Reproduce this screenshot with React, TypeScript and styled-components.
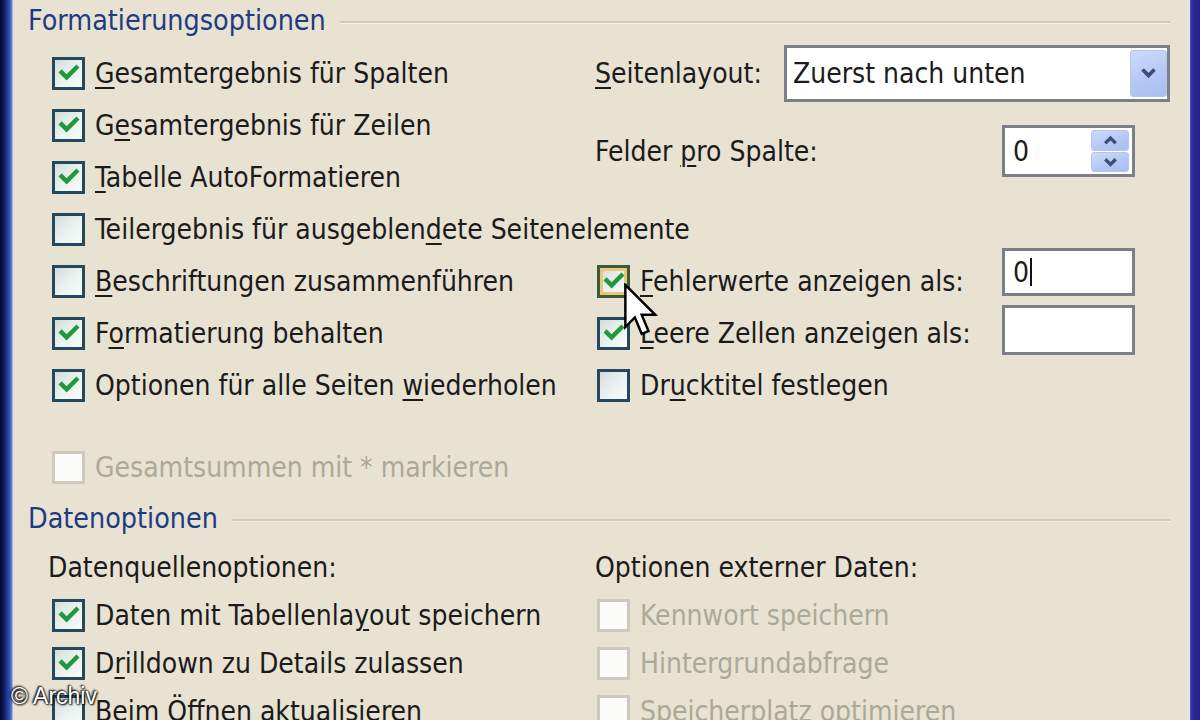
import React from "react";
import styled, { createGlobalStyle, css } from "styled-components";

const Global = createGlobalStyle`
  html, body { margin: 0; padding: 0; width: 1200px; height: 720px; overflow: hidden; background: #e7e2d2; }
  #root { width: 1200px; height: 720px; }
`;

const FONT = `"DejaVu Sans Condensed", "DejaVu Sans", sans-serif`;

const Frame = styled.div`
  position: relative;
  display: flex;
  width: 1200px;
  height: 720px;
  overflow: hidden;
  background: #e7e2d2;
  font-family: ${FONT};
  font-size: 28px;
  color: #1b1b1b;
`;

const EdgeLeft = styled.div`
  width: 13px;
  flex: none;
  background: linear-gradient(90deg, #040828 0, #0e1c60 30%, #2b4cb4 70%, #5a78d0 88%, #c9cfe0 100%);
`;

const EdgeRight = styled.div`
  width: 12px;
  flex: none;
  background: linear-gradient(90deg, #e4e6ee 0, #e4e6ee 2px, #4545b0 2px, #2a2a98 5px, #22228a 100%);
`;

const Body = styled.div`
  flex: 1;
  display: flex;
  flex-direction: column;
  padding: 0 18px 0 15px;
  min-width: 0;
`;

const SectionHeader = styled.div<{ $h: number }>`
  display: flex;
  align-items: center;
  height: ${(p) => p.$h}px;
  flex: none;
`;

const SectionTitle = styled.span`
  color: #213b82;
  font-size: 28.4px;
  white-space: nowrap;
`;

const Rule = styled.div`
  flex: 1;
  margin-left: 14px;
  margin-top: 4px;
  border-top: 2px solid #cfcbbb;
  border-bottom: 1px solid #f4f1e6;
`;

const OptionGrid = styled.div<{ $row: number; $top: number }>`
  display: grid;
  grid-template-columns: 543px 1fr;
  grid-auto-rows: ${(p) => p.$row}px;
  margin-left: 24px;
  margin-top: ${(p) => p.$top}px;
  flex: none;
`;

const Cell = styled.div<{ $col?: string; $row?: string; $shift?: number }>`
  display: flex;
  align-items: center;
  min-width: 0;
  ${(p) => p.$col && css`grid-column: ${p.$col};`}
  ${(p) => p.$row && css`grid-row: ${p.$row};`}
  margin-left: ${(p) => p.$shift ?? 0}px;
`;

const CheckRow = styled.label<{ $disabled?: boolean }>`
  display: flex;
  align-items: center;
  gap: 10px;
  white-space: nowrap;
  color: ${(p) => (p.$disabled ? "#aba999" : "#1b1b1b")};
`;

const Box = styled.span<{ $disabled?: boolean; $hot?: boolean }>`
  width: 33px;
  height: 33px;
  box-sizing: border-box;
  flex: none;
  display: flex;
  align-items: center;
  justify-content: center;
  border: 3px solid ${(p) => (p.$disabled ? "#cdcabd" : p.$hot ? "#3c5a3a" : "#24495e")};
  background: ${(p) =>
    p.$disabled ? "#fbfbf8" : "linear-gradient(135deg, #d6dcda 0%, #e9f1ef 50%, #fafcfb 100%)"};
  ${(p) => p.$hot && css`box-shadow: inset 0 0 0 3px #e9c87a;`}
`;

const Mn = styled.u`
  text-decoration-thickness: 2px;
  text-underline-offset: 4px;
`;

const Plain = styled.span``;

const Check = ({ on }: { on: boolean }) =>
  on ? (
    <svg width="22" height="22" viewBox="0 0 11 11">
      <path d="M1.8 5.2 L4.3 7.7 L9.2 2.8" fill="none" stroke="#1f9a3a" strokeWidth="2.2" strokeLinecap="square" />
    </svg>
  ) : null;

type CB = { label: string; m?: number; on?: boolean; disabled?: boolean; hot?: boolean };

const renderLabel = (label: string, m?: number) => {
  if (m === undefined) return <Plain>{label}</Plain>;
  return (
    <Plain>
      {label.slice(0, m)}
      <Mn>{label[m]}</Mn>
      {label.slice(m + 1)}
    </Plain>
  );
};

const CheckItem = ({ label, m, on = false, disabled, hot }: CB) => (
  <CheckRow $disabled={disabled}>
    <Box $disabled={disabled} $hot={hot}>
      <Check on={on} />
    </Box>
    {renderLabel(label, m)}
  </CheckRow>
);

const FieldLabel = styled.span`
  white-space: nowrap;
`;

const Select = styled.div`
  margin-left: auto;
  width: 386px;
  height: 57px;
  box-sizing: border-box;
  border: 3px solid #7b7f88;
  background: #ffffff;
  display: flex;
  align-items: stretch;
  padding: 2px 0 2px 6px;
`;

const SelectValue = styled.span`
  flex: 1;
  display: flex;
  align-items: center;
`;

const DropButton = styled.div`
  width: 37px;
  box-sizing: border-box;
  border: 1px solid #b4c6ee;
  border-radius: 3px;
  background: linear-gradient(160deg, #cddbfb 0%, #b3c7f5 60%, #a9bff2 100%);
  display: flex;
  align-items: center;
  justify-content: center;
`;

const InputBox = styled.div<{ $h: number; $lift?: number }>`
  margin-left: auto;
  margin-right: 35px;
  margin-bottom: ${(p) => (p.$lift ?? 0) * 2}px;
  width: 133px;
  height: ${(p) => p.$h}px;
  box-sizing: border-box;
  border: 3px solid #7b7f88;
  background: #ffffff;
  display: flex;
  align-items: center;
  padding: 0 3px 0 8px;
`;

const InputText = styled.span`
  flex: 1;
  display: flex;
  align-items: center;
`;

const Caret = styled.span`
  display: inline-block;
  width: 2px;
  height: 28px;
  margin-left: 1px;
  background: #111;
`;

const SpinButtons = styled.div`
  width: 38px;
  height: 42px;
  display: flex;
  flex-direction: column;
  gap: 1px;
`;

const SpinHalf = styled.div`
  flex: 1;
  border: 1px solid #b4c6ee;
  border-radius: 3px;
  background: linear-gradient(160deg, #cddbfb 0%, #b3c7f5 60%, #a9bff2 100%);
  display: flex;
  align-items: center;
  justify-content: center;
`;

const Chevron = ({ up, size = 16 }: { up?: boolean; size?: number }) => (
  <svg width={size} height={size * 0.7} viewBox="0 0 10 7">
    <path
      d={up ? "M1.5 5.5 L5 2 L8.5 5.5" : "M1.5 1.5 L5 5 L8.5 1.5"}
      fill="none"
      stroke="#3a4e78"
      strokeWidth="2.2"
    />
  </svg>
);

const Cursor = styled.svg`
  position: absolute;
  left: 624px;
  top: 283px;
`;

const Watermark = styled.div`
  position: absolute;
  left: 11px;
  top: 683px;
  font-family: "Liberation Sans", Arial, sans-serif;
  font-size: 23px;
  color: #ffffff;
  text-shadow: 0 0 2px #000, 1px 1px 2px #000, -1px -1px 2px #000;
`;

export default function App() {
  return (
    <>
      <Global />
      <Frame>
        <EdgeLeft />
        <Body>
          <SectionHeader $h={40}>
            <SectionTitle>Formatierungsoptionen</SectionTitle>
            <Rule />
          </SectionHeader>
          <OptionGrid $row={52} $top={7}>
            <Cell $col="1" $row="1">
              <CheckItem label="Gesamtergebnis für Spalten" m={0} on />
            </Cell>
            <Cell $col="1" $row="2">
              <CheckItem label="Gesamtergebnis für Zeilen" m={1} on />
            </Cell>
            <Cell $col="1" $row="3">
              <CheckItem label="Tabelle AutoFormatieren" m={0} on />
            </Cell>
            <Cell $col="1 / -1" $row="4">
              <CheckItem label="Teilergebnis für ausgeblendete Seitenelemente" m={26} />
            </Cell>
            <Cell $col="1" $row="5">
              <CheckItem label="Beschriftungen zusammenführen" m={0} />
            </Cell>
            <Cell $col="1" $row="6">
              <CheckItem label="Formatierung behalten" m={1} on />
            </Cell>
            <Cell $col="1" $row="7">
              <CheckItem label="Optionen für alle Seiten wiederholen" m={25} on />
            </Cell>

            <Cell $col="2" $row="1">
              <FieldLabel>{renderLabel("Seitenlayout:", 0)}</FieldLabel>
              <Select>
                <SelectValue>Zuerst nach unten</SelectValue>
                <DropButton>
                  <Chevron size={17} />
                </DropButton>
              </Select>
            </Cell>
            <Cell $col="2" $row="2 / 4">
              <FieldLabel>{renderLabel("Felder pro Spalte:", 7)}</FieldLabel>
              <InputBox $h={52}>
                <InputText>0</InputText>
                <SpinButtons>
                  <SpinHalf>
                    <Chevron up size={15} />
                  </SpinHalf>
                  <SpinHalf>
                    <Chevron size={15} />
                  </SpinHalf>
                </SpinButtons>
              </InputBox>
            </Cell>
            <Cell $col="2" $row="5" $shift={2}>
              <CheckItem label="Fehlerwerte anzeigen als:" m={0} on hot />
              <InputBox $h={48} $lift={9}>
                <InputText>
                  0<Caret />
                </InputText>
              </InputBox>
            </Cell>
            <Cell $col="2" $row="6" $shift={2}>
              <CheckItem label="Leere Zellen anzeigen als:" m={0} on />
              <InputBox $h={50} $lift={3} />
            </Cell>
            <Cell $col="2" $row="7" $shift={2}>
              <CheckItem label="Drucktitel festlegen" m={2} />
            </Cell>
          </OptionGrid>

          <OptionGrid $row={52} $top={30}>
            <Cell $col="1">
              <CheckItem label="Gesamtsummen mit * markieren" disabled />
            </Cell>
          </OptionGrid>

          <SectionHeader $h={50}>
            <SectionTitle>Datenoptionen</SectionTitle>
            <Rule />
          </SectionHeader>
          <OptionGrid $row={48} $top={0}>
            <Cell $col="1" $row="1" $shift={-4}>
              <FieldLabel>Datenquellenoptionen:</FieldLabel>
            </Cell>
            <Cell $col="1" $row="2">
              <CheckItem label="Daten mit Tabellenlayout speichern" m={20} on />
            </Cell>
            <Cell $col="1" $row="3">
              <CheckItem label="Drilldown zu Details zulassen" m={1} on />
            </Cell>
            <Cell $col="1" $row="4">
              <CheckItem label="Beim Öffnen aktualisieren" m={15} />
            </Cell>
            <Cell $col="2" $row="1">
              <FieldLabel>Optionen externer Daten:</FieldLabel>
            </Cell>
            <Cell $col="2" $row="2" $shift={2}>
              <CheckItem label="Kennwort speichern" disabled />
            </Cell>
            <Cell $col="2" $row="3" $shift={2}>
              <CheckItem label="Hintergrundabfrage" disabled />
            </Cell>
            <Cell $col="2" $row="4" $shift={2}>
              <CheckItem label="Speicherplatz optimieren" disabled />
            </Cell>
          </OptionGrid>
        </Body>
        <EdgeRight />
        <Cursor width="34" height="54" viewBox="0 0 12.5 19.5">
          <path
            d="M0.5 0.5 L0.5 16 L4 12.5 L6.5 18.5 L9 17.5 L6.5 11.5 L11.5 11.5 Z"
            fill="#ffffff"
            stroke="#000000"
            strokeWidth="0.9"
            strokeLinejoin="miter"
          />
        </Cursor>
        <Watermark>© Archiv</Watermark>
      </Frame>
    </>
  );
}
